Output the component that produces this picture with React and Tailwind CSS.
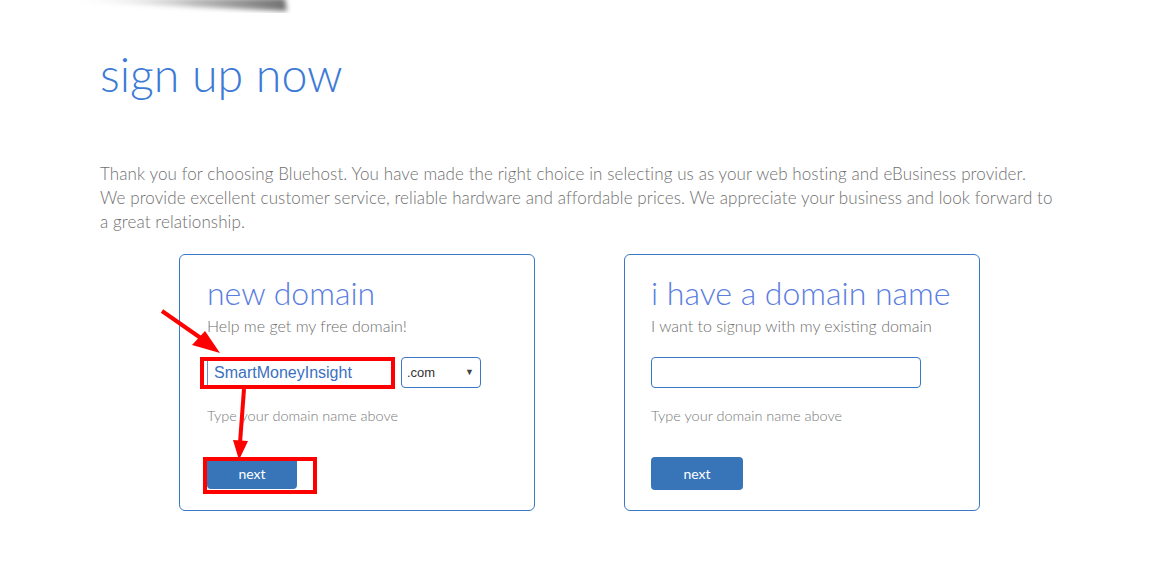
import React from "react";

const font = { fontFamily: "Lato, 'Open Sans', 'Noto Sans', sans-serif" };

export default function App() {
  return (
    <div className="relative w-[1164px] h-[562px] bg-white overflow-hidden font-light" style={font}>
      {/* top shadow */}
      <svg className="absolute left-0 top-0" width="300" height="20" viewBox="0 0 300 20">
        <defs>
          <linearGradient id="sg" x1="0" x2="1" y1="0" y2="0">
            <stop offset="0" stopColor="#ffffff" stopOpacity="0" />
            <stop offset="0.6" stopColor="#b8b8b8" />
            <stop offset="1" stopColor="#707070" />
          </linearGradient>
          <filter id="bl"><feGaussianBlur stdDeviation="2.5" /></filter>
        </defs>
        <polygon points="60,-2 285,-2 287,11 60,1" fill="url(#sg)" filter="url(#bl)" />
      </svg>

      <div className="pl-[100px] pt-[48px]">
        <h1 className="text-[46.5px] leading-[52px] text-[#3d7bd6] font-light">sign up now</h1>
        <p className="mt-[62px] text-[17px] leading-[24px] text-[#6f6f6f] tracking-[0.1px]">
          Thank you for choosing Bluehost. You have made the right choice in selecting us as your web hosting and eBusiness provider.
          <br />
          We provide excellent customer service, reliable hardware and affordable prices. We appreciate your business and look forward to
          <br />
          a great relationship.
        </p>

        <div className="mt-[20px] ml-[79px] flex gap-[89px]">
          {/* left card */}
          <div className="relative w-[356px] h-[257px] border border-[#3a78c8] rounded-[6px] pl-[27px] pt-[20px]">
            <div className="text-[32px] leading-[36px] text-[#5a7de0]">new domain</div>
            <div className="mt-[4px] text-[16px] leading-[22px] text-[#6f6f6f]">Help me get my free domain!</div>
            <div className="mt-[20px] flex items-center gap-[14px]">
              <div className="w-[180px] h-[30px] border-l border-[#6a8fc8] pl-[6px] flex items-center text-[16px] text-[#3a70c0]" style={{ fontFamily: "'Liberation Sans', Arial, sans-serif", fontWeight: 400 }}>
                SmartMoneyInsight
              </div>
              <div className="w-[80px] h-[31px] border border-[#3a78c8] rounded-[4px] flex items-center justify-between pl-[5px] pr-[6px] text-[13px] text-[#333]" style={{ fontFamily: "'Liberation Sans', Arial, sans-serif", fontWeight: 400 }}>
                <span>.com</span>
                <span className="text-[9px] text-[#444]">▼</span>
              </div>
            </div>
            <div className="mt-[18px] text-[14.5px] leading-[20px] text-[#7a7a7a]">Type your domain name above</div>
            <button className="mt-[31px] w-[90px] h-[32px] bg-[#3775b8] rounded-[4px] text-white text-[14px] font-normal">next</button>

            {/* annotations */}
            <svg className="absolute left-[-20px] top-[40px] pointer-events-none" width="180" height="220" viewBox="0 0 180 220" style={{ overflow: "visible" }}>
              <line x1="2" y1="16" x2="45" y2="46" stroke="#ff0000" strokeWidth="4" />
              <polygon points="60,58 32,50 45,36" fill="#ff0000" />
              <rect x="42" y="64" width="191" height="28" fill="none" stroke="#ff0000" strokeWidth="4" />
              <line x1="84" y1="94" x2="80" y2="148" stroke="#ff0000" strokeWidth="4" />
              <polygon points="73,145 88,146 79,165" fill="#ff0000" />
              <rect x="45" y="164" width="110" height="33" fill="none" stroke="#ff0000" strokeWidth="4" />
            </svg>
          </div>

          {/* right card */}
          <div className="w-[356px] h-[257px] border border-[#3a78c8] rounded-[6px] pl-[26px] pt-[20px]">
            <div className="text-[32px] leading-[36px] text-[#5a7de0]">i have a domain name</div>
            <div className="mt-[4px] text-[16px] leading-[22px] text-[#6f6f6f]">I want to signup with my existing domain</div>
            <div className="mt-[20px] w-[270px] h-[31px] border border-[#3a78c8] rounded-[4px]"></div>
            <div className="mt-[18px] text-[14.5px] leading-[20px] text-[#7a7a7a]">Type your domain name above</div>
            <button className="mt-[31px] w-[92px] h-[33px] bg-[#3775b8] rounded-[4px] text-white text-[14px] font-normal">next</button>
          </div>
        </div>
      </div>
    </div>
  );
}
